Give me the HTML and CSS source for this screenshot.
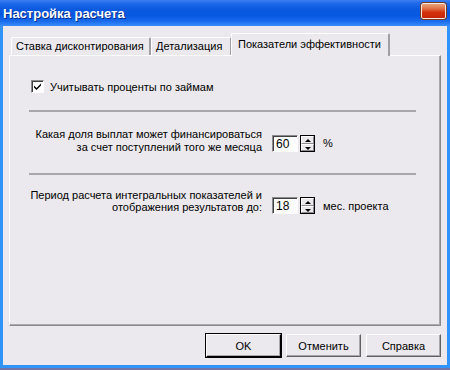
FILE: index.html
```html
<!DOCTYPE html>
<html>
<head>
	<title>Настройка расчета</title>
	<meta charset="utf-8">
	<link rel="stylesheet" href="styles.css">
</head>
<body>
  <div class="window">
    <div class="titlebar">
      <span class="title">Настройка расчета</span>
      <span class="close-btn"></span>
    </div>
    <div class="client">
      <div class="tabs">
        <div class="tab tab-1">Ставка дисконтирования</div>
        <div class="tab tab-2">Детализация</div>
        <div class="tab tab-3 active">Показатели эффективности</div>
      </div>
      <div class="panel">
        <label class="check-row">
          <span class="checkbox">
            <svg width="9" height="9" viewBox="0 0 9 9"><path d="M1 3.5 L3.5 6 L8 1.5 L8 3.5 L3.5 8 L1 5.5 Z" fill="#000"/></svg>
          </span>
          <span>Учитывать проценты по займам</span>
        </label>
        <div class="separator"></div>
        <div class="field-row row-share">
          <div class="field-label">Какая доля выплат может финансироваться<br>за счет поступлений того же месяца</div>
          <div class="edit">60</div>
          <div class="spin"><span class="spin-up"></span><span class="spin-down"></span></div>
          <div class="unit">%</div>
        </div>
        <div class="separator"></div>
        <div class="field-row row-period">
          <div class="field-label">Период расчета интегральных показателей и<br>отображения результатов до:</div>
          <div class="edit">18</div>
          <div class="spin"><span class="spin-up"></span><span class="spin-down"></span></div>
          <div class="unit">мес. проекта</div>
        </div>
      </div>
      <div class="buttons">
        <button class="btn default">OK</button>
        <button class="btn">Отменить</button>
        <button class="btn">Справка</button>
      </div>
    </div>
  </div>
</body>
</html>
```
FILE: styles.css
```css
html, body{
	margin: 0;
	padding: 0;
	background: #7273a6;
}
.window{
	display: flex;
	flex-direction: column;
	width: 450px;
	height: 368px;
	font-family: "Liberation Sans", Arial, sans-serif;
	font-size: 11px;
	color: #000;
}
.titlebar{
	display: flex;
	align-items: center;
	justify-content: space-between;
	height: 26px;
	padding: 0 4px 0 3px;
	background: linear-gradient(#3d80f2 0%, #1f6bea 12%, #0a5ae0 35%, #0657e2 60%, #1a6cee 82%, #3a8cf9 100%);
}
.title{
	color: #fff;
	font-weight: bold;
	font-size: 13px;
	text-shadow: 1px 1px 0 #0a2a8a;
}
.close-btn{
	width: 23px;
	height: 14px;
	margin-bottom: 5px;
	border: 1px solid #f0e8e0;
	outline: 1px solid #7a3a20;
	background: linear-gradient(#e9a37a 0%, #e2764c 30%, #d3300c 60%, #c9260a 100%);
	border-radius: 2px;
}
.client{
	display: flex;
	flex-direction: column;
	flex: 1;
	padding: 7px 6px 8px 6px;
	background: #ebe9ed;
	border-left: 3px solid #2f93fb;
	border-right: 3px solid #2f93fb;
	border-bottom: 3px solid #2f93fb;
}
.tabs{
	display: flex;
	align-items: flex-end;
	height: 22px;
	padding-left: 2px;
}
.tab{
	height: 18px;
	line-height: 17px;
	padding: 0 4px;
	background: #ebe9ed;
	border-top: 1px solid #fff;
	border-left: 1px solid #fff;
	border-right: 2px solid #a09fa4;
	border-radius: 2px 2px 0 0;
	box-sizing: border-box;
	white-space: nowrap;
}
.tab-1{
	width: 140px;
}
.tab-2{
	width: 81px;
}
.tab-3{
	width: 159px;
}
.tab.active{
	position: relative;
	height: 23px;
	margin-left: -1px;
	margin-bottom: -1px;
	padding-left: 6px;
	line-height: 21px;
	z-index: 1;
}
.panel{
	display: flex;
	flex-direction: column;
	flex: 1;
	padding: 0 24px 0 19px;
	border-top: 1px solid #fff;
	border-left: 1px solid #fff;
	border-right: 1px solid #8b8a8f;
	border-bottom: 1px solid #8b8a8f;
	box-shadow: inset -1px -1px 0 #a8a7ac;
}
.check-row{
	display: flex;
	align-items: center;
	gap: 6px;
	margin: 24px 0 0 2px;
	height: 13px;
}
.checkbox{
	display: flex;
	align-items: center;
	justify-content: center;
	width: 13px;
	height: 13px;
	box-sizing: border-box;
	background: #fff;
	border-top: 1px solid #8b8a8f;
	border-left: 1px solid #8b8a8f;
	border-right: 1px solid #fff;
	border-bottom: 1px solid #fff;
	box-shadow: inset 1px 1px 0 #404040;
}
.separator{
	height: 2px;
	background: #a7a6ab;
}
.check-row + .separator{
	margin-top: 17px;
}
.field-row{
	display: flex;
	align-items: flex-start;
}
.row-share{
	margin: 16px 0 19px 0;
}
.row-period{
	margin-top: 14px;
}
.field-label{
	width: 233px;
	text-align: right;
	line-height: 13px;
}
.row-period .field-label{
	line-height: 12px;
}
.edit{
	width: 26px;
	height: 17px;
	margin: 7px 0 0 10px;
	padding-left: 3px;
	line-height: 16px;
	font-size: 12px;
	box-sizing: border-box;
	background: #fff;
	border-top: 1px solid #8b8a8f;
	border-left: 1px solid #8b8a8f;
	border-right: 1px solid #fff;
	border-bottom: 1px solid #fff;
	box-shadow: inset 1px 1px 0 #404040;
}
.spin{
	display: flex;
	flex-direction: column;
	width: 15px;
	height: 17px;
	margin: 7px 0 0 2px;
	box-sizing: border-box;
	border: 1px solid #000;
	background: #ebe9ed;
}
.row-period .edit,
.row-period .spin{
	margin-top: 8px;
}
.spin span{
	position: relative;
	flex: 1;
	border-top: 1px solid #fff;
	border-left: 1px solid #fff;
	border-bottom: 1px solid #8b8a8f;
	border-right: 1px solid #8b8a8f;
}
.spin span::after{
	content: "";
	position: absolute;
	left: 3px;
	width: 0;
	height: 0;
	border-left: 3px solid transparent;
	border-right: 3px solid transparent;
}
.spin-up::after{
	top: 2px;
	border-bottom: 3px solid #000;
}
.spin-down::after{
	top: 2px;
	border-top: 3px solid #000;
}
.unit{
	margin: 9px 0 0 8px;
	line-height: 13px;
}
.row-period .unit{
	margin-top: 11px;
}
.buttons{
	display: flex;
	justify-content: flex-end;
	gap: 5px;
	margin-top: 8px;
}
.btn{
	width: 75px;
	height: 23px;
	font-family: "Liberation Sans", Arial, sans-serif;
	font-size: 11px;
	color: #000;
	background: #ebe9ed;
	border-top: 1px solid #fff;
	border-left: 1px solid #fff;
	border-right: 1px solid #606060;
	border-bottom: 1px solid #606060;
	box-shadow: inset -1px -1px 0 #a7a6ab;
	padding: 0;
}
.btn.default{
	outline: 1px solid #000;
	outline-offset: 0;
	border-right-color: #000;
	border-bottom-color: #000;
}
```
